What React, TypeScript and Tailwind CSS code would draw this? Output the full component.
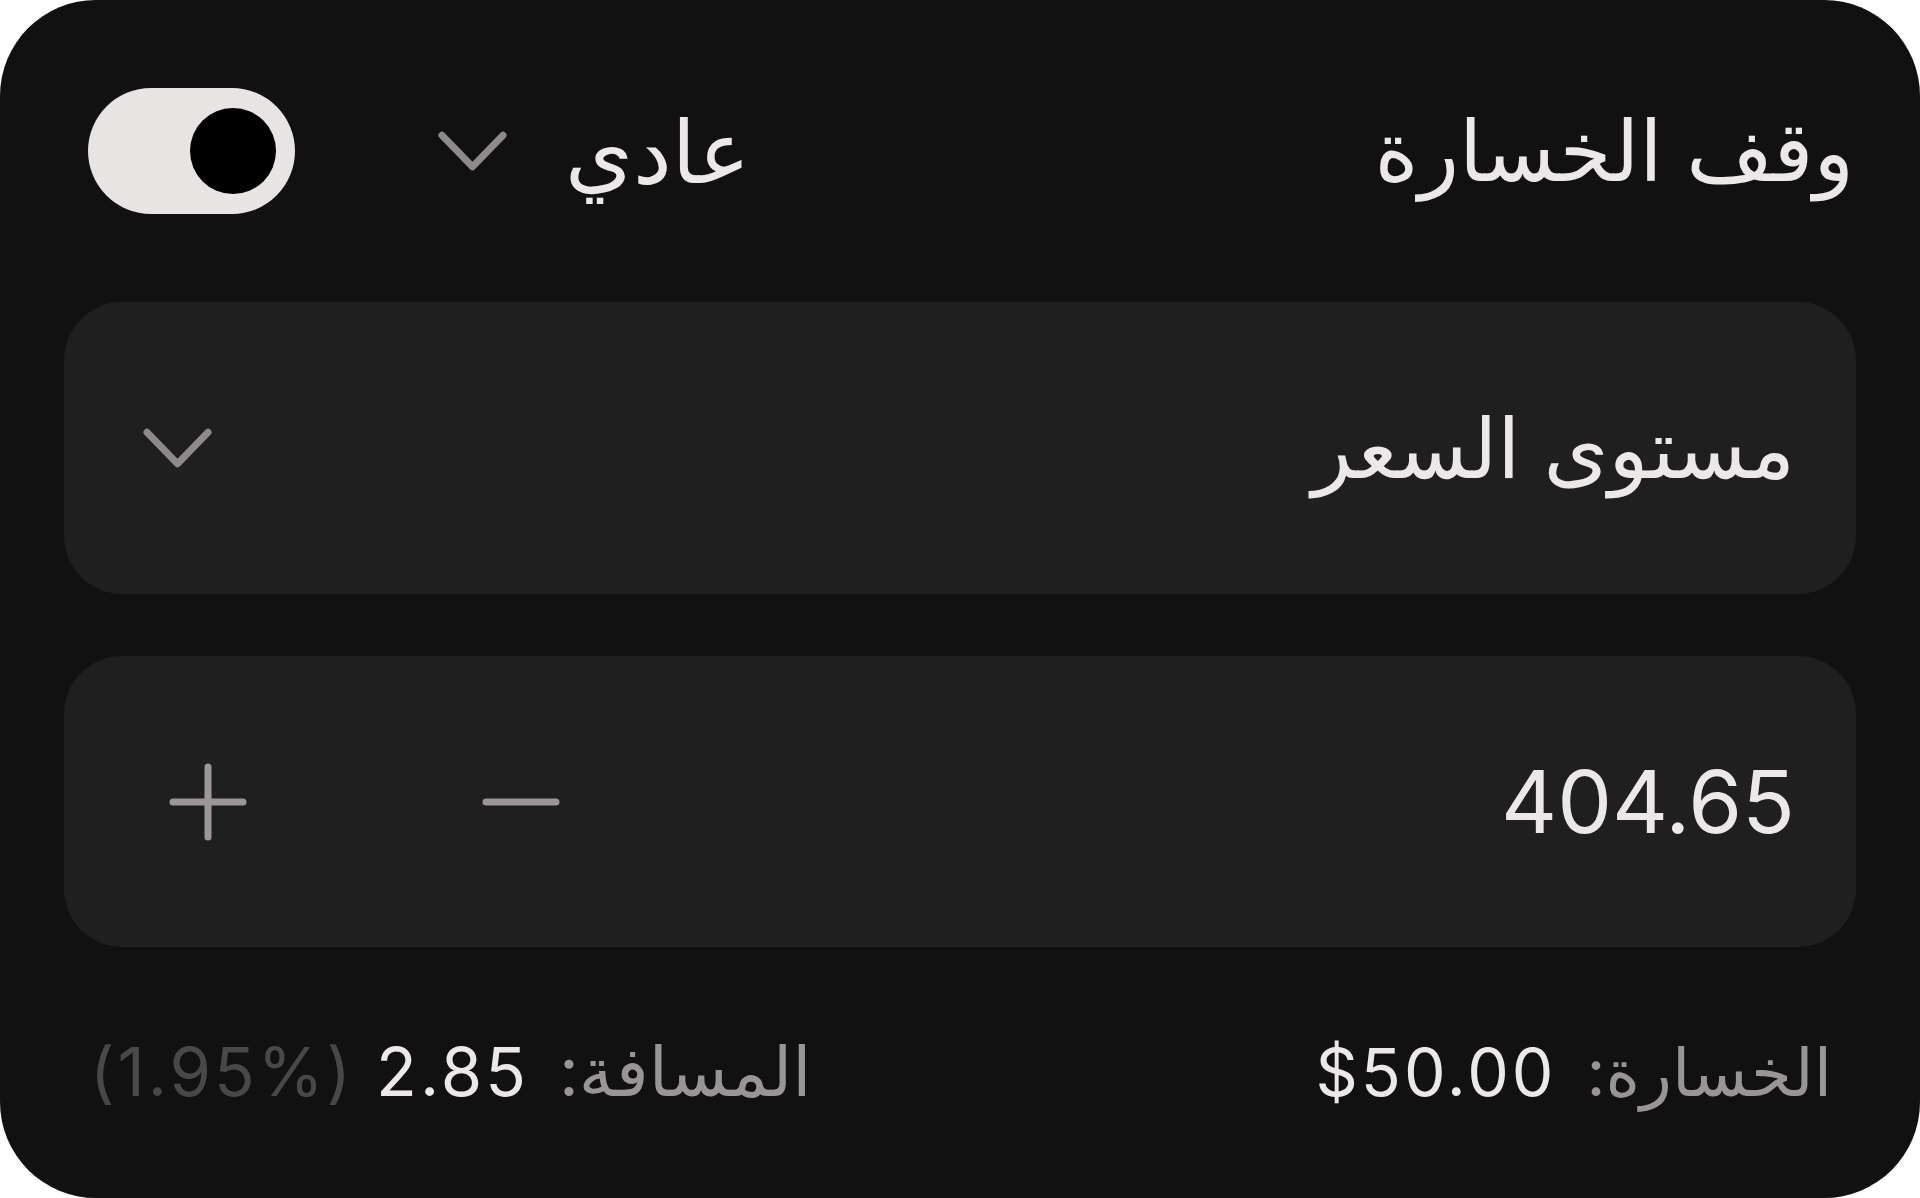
import React, { useState } from 'react'

const Chevron = ({ className = '' }: { className?: string }) => (
  <svg viewBox="0 0 70 42" className={className} fill="none">
    <polyline
      points="4,5 35,37 66,5"
      stroke="#8f8a8a"
      strokeWidth="7"
      strokeLinecap="round"
      strokeLinejoin="round"
    />
  </svg>
)

const StopLossCard = () => {
  const [enabled, setEnabled] = useState(true)
  const [price, setPrice] = useState(404.65)

  return (
    <div className="w-full h-screen bg-white">
      <div
        dir="rtl"
        className="w-full h-full bg-[#121112] rounded-[96px] flex flex-col px-[64px] pt-[88px] font-['Inter','DejaVu_Sans',sans-serif] text-[#ece8e8]"
      >
        {/* Header row */}
        <div className="flex items-center h-[126px] pr-[2px] pl-[24px]">
          <span className="text-[84px] leading-none">وقف الخسارة</span>
          <div className="flex-1" />
          <button className="flex items-center gap-[58px]">
            <span className="text-[87px] leading-none">عادي</span>
            <Chevron className="w-[69px] h-[42px]" />
          </button>
          <button
            onClick={() => setEnabled(!enabled)}
            className="mr-[143px] w-[207px] h-[126px] rounded-full bg-[#e8e4e4] flex items-center justify-start px-[19px]"
          >
            <span className="w-[86px] h-[86px] rounded-full bg-black" />
          </button>
        </div>

        {/* Price level select */}
        <div className="mt-[88px] h-[292px] rounded-[58px] bg-[#1f1f1f] flex items-center justify-between pr-[61px] pl-[79px]">
          <span className="text-[83px] leading-none">مستوى السعر</span>
          <Chevron className="w-[69px] h-[42px]" />
        </div>

        {/* Price input */}
        <div className="mt-[62px] h-[291px] rounded-[58px] bg-[#1f1f1f] flex items-center pr-[61px] pl-[105px]">
          <span className="text-[87px] leading-none">{price.toFixed(2)}</span>
          <div className="flex-1" />
          <button onClick={() => setPrice(p => p - 0.05)} className="w-[78px] h-[78px] flex items-center justify-center">
            <svg viewBox="0 0 78 78" className="w-[78px] h-[78px]">
              <line x1="4" y1="39" x2="74" y2="39" stroke="#9c9696" strokeWidth="7" strokeLinecap="round" />
            </svg>
          </button>
          <button onClick={() => setPrice(p => p + 0.05)} className="mr-[235px] w-[78px] h-[78px] flex items-center justify-center">
            <svg viewBox="0 0 78 78" className="w-[78px] h-[78px]">
              <line x1="4" y1="39" x2="74" y2="39" stroke="#9c9696" strokeWidth="7" strokeLinecap="round" />
              <line x1="39" y1="4" x2="39" y2="74" stroke="#9c9696" strokeWidth="7" strokeLinecap="round" />
            </svg>
          </button>
        </div>

        {/* Summary */}
        <div className="flex-1 flex items-center justify-between pr-[24px] pl-[26px] pb-[2px] leading-none">
          <div className="flex items-center gap-[30px]">
            <span className="text-[66px] text-[#9a9595]">الخسارة:</span>
            <span dir="ltr" className="text-[66px] tracking-[3px]">$50.00</span>
          </div>
          <div className="flex items-center">
            <span className="text-[69px] text-[#9a9595]">المسافة:</span>
            <span dir="ltr" className="mr-[30px] text-[67px] tracking-[3px]">2.85</span>
            <span dir="ltr" className="mr-[22px] text-[67px] tracking-[3px] text-[#4a4747]">(1.95%)</span>
          </div>
        </div>
      </div>
    </div>
  )
}

export default StopLossCard
